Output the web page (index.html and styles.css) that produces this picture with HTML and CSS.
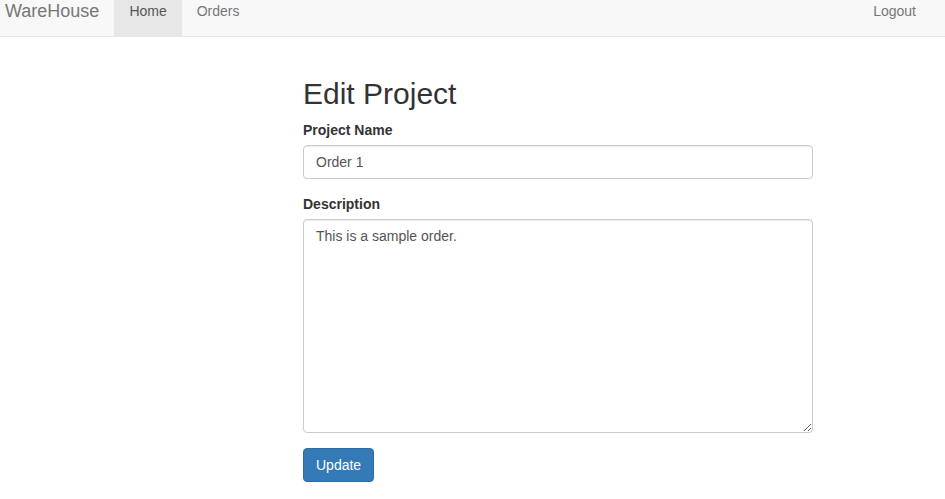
FILE: index.html
```html
<!DOCTYPE html>
<html>
<head>
<meta charset="utf-8">
<link rel="stylesheet" href="styles.css">
</head>
<body>
<nav class="navbar">
  <a class="brand" href="#">WareHouse</a>
  <ul class="nav">
    <li><a class="active" href="#">Home</a></li>
    <li><a href="#">Orders</a></li>
  </ul>
  <ul class="nav nav-right">
    <li><a href="#">Logout</a></li>
  </ul>
</nav>
<main class="content">
  <h2 class="title">Edit Project</h2>
  <form class="form">
    <div class="form-group">
      <label class="label">Project Name</label>
      <input class="control" type="text" value="Order 1">
    </div>
    <div class="form-group">
      <label class="label">Description</label>
      <textarea class="control area">This is a sample order.</textarea>
    </div>
    <button class="btn" type="button">Update</button>
  </form>
</main>
</body>
</html>
```
FILE: styles.css
```css
* { box-sizing: border-box; }
html, body { margin: 0; padding: 0; }
body {
  font-family: "Liberation Sans", Arial, sans-serif;
  font-size: 14px;
  line-height: 20px;
  color: #333;
  background: #fff;
}
.navbar {
  display: flex;
  height: 37px;
  background: #f8f8f8;
  border-bottom: 1px solid #e7e7e7;
}
.brand {
  display: block;
  padding: 1px 15px 0 5px;
  font-size: 18px;
  line-height: 20px;
  color: #777;
  text-decoration: none;
}
.nav {
  display: flex;
  list-style: none;
  margin: 0 0 0 0;
  padding: 0 0 0 0;
}
.nav a {
  display: block;
  height: 36px;
  padding: 1px 15px 0 15px;
  color: #777;
  text-decoration: none;
  line-height: 20px;
}
.nav a.active {
  background: #e7e7e7;
  color: #555;
}
.nav-right {
  margin-left: auto;
  margin-right: 14px;
}
.content {
  padding: 20px 0 0 303px;
  width: 813px;
}
.title {
  margin: 20px 0 10px;
  font-size: 30px;
  font-weight: 500;
  line-height: 33px;
  color: #333;
}
.form-group { margin-bottom: 15px; }
.label {
  display: block;
  font-weight: bold;
  margin-bottom: 5px;
}
.control {
  display: block;
  width: 510px;
  height: 34px;
  padding: 6px 12px;
  font-family: inherit;
  font-size: 14px;
  line-height: 20px;
  color: #555;
  background: #fff;
  border: 1px solid #ccc;
  border-radius: 4px;
  box-shadow: inset 0 1px 1px rgba(0,0,0,.075);
  margin: 0;
}
.area {
  height: 214px;
  resize: vertical;
}
.btn {
  display: block;
  height: 34px;
  padding: 6px 12px;
  font-family: inherit;
  font-size: 14px;
  line-height: 20px;
  color: #fff;
  background: #337ab7;
  border: 1px solid #2e6da4;
  border-radius: 4px;
  cursor: pointer;
}
```
